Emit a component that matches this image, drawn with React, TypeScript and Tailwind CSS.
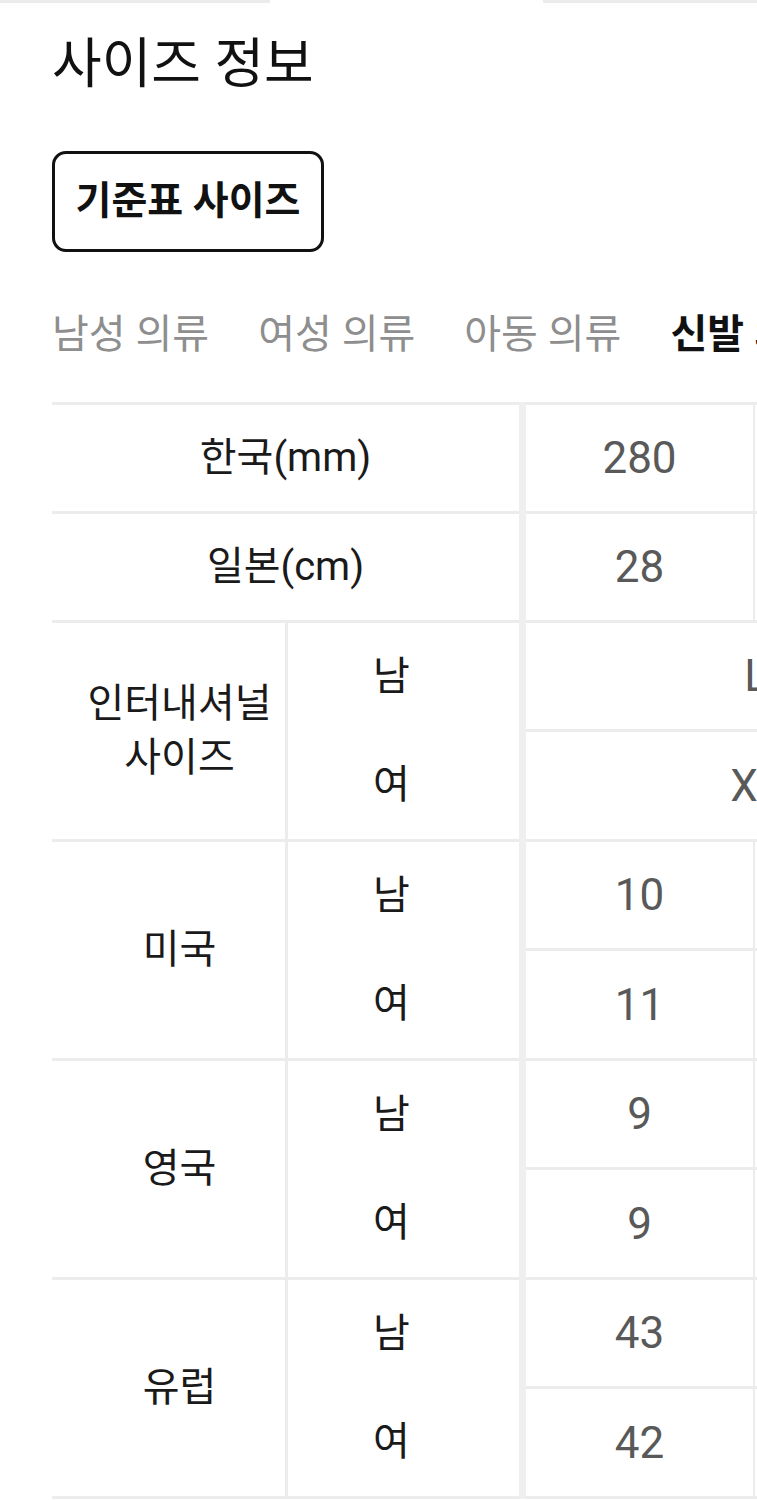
import React from "react";

type GenderRow = { label: string; male: string[]; female: string[]; span?: boolean };

const topRows = [
  { label: "한국(mm)", values: ["280", "285"] },
  { label: "일본(cm)", values: ["28", "28.5"] },
];

const genderRows: GenderRow[] = [
  { label: "인터내셔널\n사이즈", male: ["L"], female: ["XL"], span: true },
  { label: "미국", male: ["10", "10.5"], female: ["11", "11.5"] },
  { label: "영국", male: ["9", "9.5"], female: ["9", "9.5"] },
  { label: "유럽", male: ["43", "44"], female: ["42", "43"] },
];

const tabs = ["남성 의류", "여성 의류", "아동 의류", "신발 의류"];

function ValueCells({ values, span }: { values: string[]; span?: boolean }) {
  if (span) {
    return (
      <div className="flex h-full w-[460px] shrink-0 items-center justify-center border-t-[3px] border-[#ececec] text-[44px] text-[#595959]">
        {values[0]}
      </div>
    );
  }
  return (
    <>
      {values.map((v, i) => (
        <div
          key={i}
          className="flex h-full w-[229px] shrink-0 items-center justify-center border-t-[3px] border-r-[2px] border-[#ececec] text-[44px] text-[#595959]"
        >
          {v}
        </div>
      ))}
    </>
  );
}

export default function App() {
  return (
    <div className="min-h-screen w-full overflow-hidden bg-white font-['Roboto','Noto_Sans_CJK_KR',sans-serif] text-[#111]">
      <div className="flex h-[3px]">
        <div className="w-[270px] bg-[#ebebeb]" />
        <div className="w-[273px]" />
        <div className="flex-1 bg-[#ebebeb]" />
      </div>

      <div className="pl-[52px]">
        <h1 className="pt-[32px] text-[54px] leading-[60px] font-normal">사이즈 정보</h1>

        <button className="mt-[56px] flex h-[101px] w-[272px] items-center justify-center rounded-[14px] border-[3px] border-[#111] text-[39px] font-bold">
          기준표 사이즈
        </button>

        <div className="mt-[53px] flex h-[60px] items-center gap-[49px] whitespace-nowrap text-[40px] leading-[60px]">
          {tabs.map((t, i) => (
            <span key={t} className={i === 3 ? "font-bold text-[#111]" : "text-[#8e8e8e]"}>
              {t}
            </span>
          ))}
        </div>

        <div className="mt-[37px] flex">
          {/* labels */}
          <div className="w-[467px] shrink-0 border-b-[3px] border-[#ececec] text-[40px] text-[#1a1a1a]">
            {topRows.map((r) => (
              <div key={r.label} className="flex h-[109px] items-center justify-center border-t-[3px] border-[#ececec]">
                {r.label}
              </div>
            ))}
            {genderRows.map((r) => (
              <div key={r.label} className="flex h-[219px] border-t-[3px] border-[#ececec]">
                <div className="flex w-[233px] items-center justify-center whitespace-pre-line pl-[22px] text-center leading-[54px]">
                  {r.label}
                </div>
                <div className="flex flex-1 flex-col border-l-[3px] border-[#ececec] pr-[24px]">
                  <div className="flex flex-1 items-center justify-center">남</div>
                  <div className="flex flex-1 items-center justify-center">여</div>
                </div>
              </div>
            ))}
          </div>

          <div className="w-[7px] shrink-0 bg-[#efefef]" />

          {/* values */}
          <div className="flex-1 overflow-hidden border-b-[3px] border-[#ececec]">
            {topRows.map((r) => (
              <div key={r.label} className="flex h-[109px]">
                <ValueCells values={r.values} />
              </div>
            ))}
            {genderRows.map((r) => (
              <div key={r.label} className="flex h-[219px] flex-col">
                <div className="flex h-[109px]">
                  <ValueCells values={r.male} span={r.span} />
                </div>
                <div className="flex h-[110px]">
                  <ValueCells values={r.female} span={r.span} />
                </div>
              </div>
            ))}
          </div>
        </div>
      </div>
    </div>
  );
}
